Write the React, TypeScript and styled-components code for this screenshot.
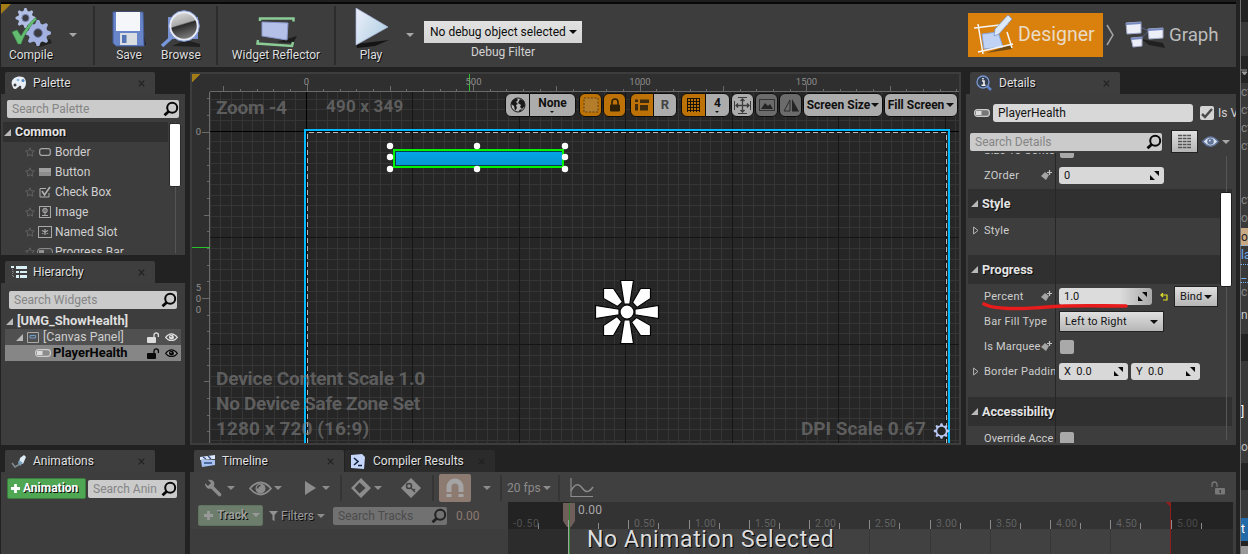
import React from "react";
import styled, { createGlobalStyle, css } from "styled-components";

const Global = createGlobalStyle`
  * { box-sizing: border-box; }
  body { margin: 0; background: #222; overflow: hidden; font-family: Roboto, "Liberation Sans", sans-serif; font-size: 12px; color: #d2d2d2; }
  svg { display: block; flex: none; }
`;

/* ---------- shared parts ---------- */
const Screen = styled.div`display: flex; width: 1248px; height: 554px; overflow: hidden; background: #222;`;
const Editor = styled.div`display: flex; flex-direction: column; width: 1236px; flex: none; border-left: 1px solid #222;`;
const TitleEdge = styled.div`height: 4px; background: #1e1e1e; border-bottom: 2px solid #080808; flex: none;`;
const Label = styled.span<{ $size?: number; $ls?: number; $color?: string; $bold?: boolean; $shadow?: boolean; $w?: number; $l?: number }>`
  display: block; white-space: nowrap; line-height: 16px; flex: none;
  font-size: ${p => p.$size ?? 12}px;
  letter-spacing: ${p => p.$ls ?? 0}px;
  font-weight: ${p => (p.$bold ? 700 : 400)};
  ${p => p.$color && css`color: ${p.$color};`}
  ${p => p.$shadow && css`text-shadow: 1px 1px 0 #0c0c0c;`}
  ${p => p.$w && css`width: ${p.$w}px; overflow: hidden;`}
  ${p => p.$l && css`margin-left: ${p.$l}px;`}
`;
const Caret = styled.i<{ $color?: string; $l?: number; $s?: number }>`
  display: block; width: 0; height: 0; flex: none; margin-left: ${p => p.$l ?? 0}px;
  border: ${p => p.$s ?? 4}px solid transparent; border-bottom: 0; border-top-color: ${p => p.$color ?? "#a8a8a8"};
`;
const Panel = styled.section<{ $h?: number }>`display: flex; flex-direction: column; ${p => p.$h && css`height: ${p.$h}px;`} flex: none;`;
const TabRow = styled.div<{ $l?: number }>`display: flex; height: 22px; flex: none; padding-left: ${p => p.$l ?? 4}px;`;
const TabBox = styled.div<{ $w: number; $dim?: boolean }>`
  display: flex; align-items: center; width: ${p => p.$w}px; padding: 0 10px 0 6px; gap: 6px;
  background: ${p => (p.$dim ? "#2b2b2b" : "#3e3e3e")}; border-radius: 2px 2px 0 0; color: #e0e0e0;
`;
const Spacer = styled.div`flex: 1;`;
const Body = styled.div<{ $h?: number }>`background: #3d3d3d; ${p => (p.$h ? css`height: ${p.$h}px;` : css`flex: 1;`)} overflow: hidden;`;
const Search = styled.div<{ $w: number; $dim?: boolean }>`
  display: flex; align-items: center; justify-content: space-between; width: ${p => p.$w}px; height: 18px; flex: none;
  background: ${p => (p.$dim ? "#717171" : "#cbcbcb")}; color: ${p => (p.$dim ? "#4c4c4c" : "#858585")}; border-radius: 2px; padding: 0 0 0 5px;
`;
const Magnifier = ({ c = "#080808" }: { c?: string }) => (
  <svg width="16" height="16" viewBox="0 0 16 16" fill="none" stroke={c} strokeWidth="2"><circle cx="9.2" cy="6.8" r="5" /><path d="M5.600 10.500 1.500 14.300" strokeWidth="2.800" /></svg>
);
const CloseX = () => <svg width="7" height="7" viewBox="0 0 7 7" stroke="#202020" strokeWidth="1.200"><path d="M.7.7 6.300 6.300M6.300.7.7 6.300" /></svg>;
const Tab = ({ title, icon, w, dim, ls, gap }: { title: string; icon: React.ReactNode; w: number; dim?: boolean; ls?: number; gap?: number }) => (
  <TabBox $w={w} $dim={dim}>{icon}<Label $shadow $ls={ls} $l={gap}>{title}</Label><Spacer /><CloseX /></TabBox>
);
const Expand = ({ c = "#b8b8b8" }: { c?: string }) => <svg width="7" height="7" viewBox="0 0 7 7"><path d="M7 0V7H0Z" fill={c} /></svg>;

/* ---------- main toolbar ---------- */
const Toolbar = styled.div`display: flex; height: 63px; flex: none; background: #3d3d3d; position: relative;`;
const CornerMark = styled.i`position: absolute; left: 0; top: 0; width: 0; height: 0; border-top: 10px solid #a37c18; border-right: 10px solid transparent;`;
const Tool = styled.div<{ $w: number; $drop?: number }>`
  display: flex; flex-direction: column; align-items: center; justify-content: flex-end; width: ${p => p.$w}px; padding-bottom: 4px; color: #dedede;
  svg { margin-bottom: ${p => -(p.$drop ?? 0)}px; }
`;
const ToolCaret = styled.div<{ $w: number }>`display: flex; width: ${p => p.$w}px; padding-top: 29px;`;
const Rule = styled.i`width: 2px; margin: 2px 0; background: #2c2c2c; flex: none;`;
const DebugBox = styled.div`display: flex; flex-direction: column; align-items: center; padding-top: 17px; width: 158px;`;
const DebugSelect = styled.div`display: flex; align-items: center; width: 158px; height: 22px; background: linear-gradient(#e2e2e2, #d4d4d4); color: #0c0c0c; padding-left: 6px; margin-bottom: 1px;`;
const Mode = styled.div<{ $on?: boolean; $w: number }>`
  display: flex; align-items: center; width: ${p => p.$w}px; height: 44px; margin-top: 9px; padding-left: 6px; gap: 4px;
  ${p => p.$on && css`background: #da810d;`}
`;
const gear = (cx: number, cy: number, r: number, n: number) => {
  const pts: string[] = [];
  for (let i = 0; i < n * 4; i++) {
    const a = ((i - 0.5) / (n * 4)) * Math.PI * 2;
    const rr = i % 4 < 2 ? r : r * 0.74;
    pts.push(`${(cx + Math.cos(a) * rr).toFixed(2)},${(cy + Math.sin(a) * rr).toFixed(2)}`);
  }
  return pts.join(" ");
};
const CompileIcon = () => (
  <svg width="42" height="40" viewBox="0 0 42 40">
    <path d="M24 36 40 31 42 35 30 39Z" fill="#222" />
    <polygon points={gear(15.500, 10, 10, 8)} fill="#b2bfe4" /><circle cx="15.500" cy="10" r="3.600" fill="#3b3b3f" stroke="#7784ad" />
    <polygon points={gear(28, 25, 13, 8)} fill="#a2b1df" /><circle cx="28" cy="25" r="4.300" fill="#3b3b3f" stroke="#6b79a8" />
    <path d="M2 24 7 22 11 28C15 21 20 14 25 10L27 11C20 18 14 27 11 36H8Z" fill="#63bd70" stroke="#3a8a49" strokeWidth=".6" />
  </svg>
);
const SaveIcon = () => (
  <svg width="34" height="36" viewBox="0 0 34 36">
    <path d="M26 36 34 34 32 24Z" fill="#202020" />
    <path d="M1 1H31L32 35H4L1 32Z" fill="#6785c8" stroke="#465f9d" />
    <rect x="4" y="1" width="24" height="19" fill="#f5f6fa" /><rect x="8" y="22" width="17" height="12" fill="#d9dde2" /><rect x="10" y="24" width="4.500" height="8" fill="#5474b5" />
  </svg>
);
const BrowseIcon = () => (
  <svg width="42" height="38" viewBox="0 0 42 38">
    <defs><linearGradient id="lens" x1="0" y1="0" x2=".3" y2="1"><stop offset="0" stopColor="#e4e4e4" /><stop offset=".5" stopColor="#aaa" /><stop offset=".55" stopColor="#2c2c2c" /><stop offset="1" stopColor="#777" /></linearGradient></defs>
    <path d="M12 36 26 30 40 34 40 37Z" fill="#202020" /><path d="M8 7H38V29H8Z" fill="#7890cf" />
    <path d="M12 27 2 36" stroke="#7896dc" strokeWidth="3.500" /><circle cx="24" cy="16" r="14" fill="url(#lens)" stroke="#e8ebf5" strokeWidth="2.500" /><circle cx="24" cy="16" r="15.300" fill="none" stroke="#7d94d0" />
  </svg>
);
const ReflectorIcon = () => (
  <svg width="42" height="34" viewBox="0 0 42 34">
    <path d="M22 27 42 21 38 28Z" fill="#1e1e1e" /><path d="M7 7 33 8 32 25 7 21Z" fill="#b4c0e8" stroke="#8a99cb" />
    <path d="M5 6V3.500H38.500V6.500M3 25 2.500 28.500 37 31 38 27" fill="none" stroke="#8bcb96" strokeWidth="2.500" />
  </svg>
);
const PlayIcon = () => (
  <svg width="36" height="41" viewBox="0 0 36 41"><defs><linearGradient id="pl" x1="0" x2="1" y1="0" y2=".6"><stop offset="0" stopColor="#eceefa" /><stop offset="1" stopColor="#b4d2e4" /></linearGradient></defs>
    <path d="M3 36 36 32 22 38 4 40Z" fill="#151515" /><path d="M3 0V37L35 19Z" fill="url(#pl)" stroke="#a9b5dc" strokeWidth=".7" /></svg>
);
const DesignerIcon = () => (
  <svg width="40" height="40" viewBox="0 0 40 40"><path d="M12 38 36 30 38 34Z" fill="#704a17" />
    <path d="M8 19 24 17 29 32 10 34Z" fill="#c0d3f4" stroke="#8ba5d5" /><g stroke="#f5f5f5" strokeWidth="1.500" fill="none"><path d="M0 13 34 9M4 9 9 39M4 37 39 29M33 17 38 33" /></g>
    <path d="M34 0 38 4 25 19 20 21 21 14Z" fill="#dde8f8" stroke="#7998cc" strokeWidth=".8" /></svg>
);
const GraphIcon = () => (
  <svg width="40" height="28" viewBox="0 0 40 28"><path d="M16 18 24 24 40 27 38 22Z" fill="#202020" /><path d="M15 6 24 10 15 18" fill="none" stroke="#53628d" />
    <g fill="#eceef8" stroke="#a2abc9"><path d="M1 2 16 1V12L2 13ZM23 8 38 7V17L24 18ZM6 17 17 16V25L8 26Z" /></g><path d="M1 3 16 2M23 9 38 8M6 18 17 17" stroke="#788ac0" strokeWidth="2" /></svg>
);

/* ---------- left panels ---------- */
const Middle = styled.div`display: flex; padding-top: 5px; height: 378px; flex: none; gap: 5px;`;
const LeftCol = styled.div`display: flex; flex-direction: column; width: 184px; gap: 6px; flex: none;`;
const SearchRow = styled.div<{ $p: string }>`display: flex; align-items: center; padding: ${p => p.$p};`;
const PaletteArea = styled.div`display: flex; height: 131px; margin-left: 2px;`;
const PaletteList = styled.div`width: 165px; overflow: hidden;`;
const Category = styled.div`display: flex; align-items: center; height: 20px; background: #303030; gap: 4px; padding-left: 1px; color: #e4e4e4;`;
const PaletteItem = styled.div`display: flex; align-items: center; height: 20px; padding-left: 22px; gap: 2px; color: #cfcfcf;`;
const IconCell = styled.span`display: flex; width: 15px; justify-content: center; flex: none;`;
const ScrollTrack = styled.div<{ $w: number }>`width: ${p => p.$w}px; margin-left: -1px; display: flex; justify-content: center; background: linear-gradient(90deg, transparent 8px, #555 8px, #555 9px, transparent 9px);`;
const Thumb = styled.i<{ $h: number; $mt: number }>`width: 12px; height: ${p => p.$h}px; margin-top: ${p => p.$mt}px; background: #fff; border: 1px solid #2a2a2a; border-radius: 2px;`;
const TreeRow = styled.div<{ $bg?: string; $h?: number; $pl: number; $c: string }>`
  display: flex; align-items: center; height: ${p => p.$h ?? 16}px; margin: 0 4px; padding-left: ${p => p.$pl}px; padding-right: 3px; background: ${p => p.$bg ?? "transparent"}; color: ${p => p.$c};
`;
const Star = () => <svg width="10" height="10" viewBox="0 0 10 10" fill="none" stroke="#626262"><path d="M5 .8 6.200 3.700 9.400 4 7 6.100 7.700 9.200 5 7.600 2.300 9.200 3 6.100.6 4 3.800 3.700Z" /></svg>;
const Padlock = ({ c }: { c: string }) => <svg width="13" height="11" viewBox="0 0 13 11"><rect x="0" y="5" width="9" height="6" rx="1" fill={c} /><path d="M7 5V3a2.200 2.200 0 0 1 4.400 0V5" fill="none" stroke={c} strokeWidth="1.300" /></svg>;
const Eye = ({ c, w = 13, bg = "#555" }: { c: string; w?: number; bg?: string }) => (
  <svg width={w} height={w * 0.66} viewBox="0 0 13 8.600"><path d="M.6 4.300Q3.500.8 6.500.8T12.400 4.300Q9.500 7.800 6.500 7.800T.6 4.300Z" fill={bg} stroke={c} strokeWidth="1.200" /><circle cx="6.500" cy="4.200" r="2.500" fill={c} /><circle cx="6" cy="3.500" r=".7" fill={bg} /></svg>
);
const WideEye = () => (
  <svg width="23" height="15" viewBox="0 0 23 15"><path d="M1 7.500Q6 1.500 11.500 1.500T22 7.500Q17 13.500 11.500 13.500T1 7.500Z" fill="none" stroke="#8c8c8c" strokeWidth="1.800" /><circle cx="11.500" cy="7.500" r="5" fill="#8c8c8c" /><path d="M8.500 7.500A3 3 0 0 1 11.500 4.500" fill="none" stroke="#404040" strokeWidth="1.400" /></svg>
);
const itemIcons: Record<string, React.ReactNode> = {
  Border: <svg width="12" height="8"><rect x=".7" y=".7" width="10.600" height="6.600" rx="2" fill="none" stroke="#a8a8a8" strokeWidth="1.200" /></svg>,
  Button: <svg width="12" height="8"><rect width="12" height="8" fill="#8d8d8d" /><rect width="12" height="4" fill="#a0a0a0" /></svg>,
  "Check Box": <svg width="12" height="12" viewBox="0 0 12 12" fill="none" stroke="#b0b0b0"><path d="M7 2.500H1V11H10V7" /><path d="M3 5 5.500 9 11 1" strokeWidth="1.700" /></svg>,
  Image: <svg width="12" height="12" viewBox="0 0 12 12" fill="none" stroke="#a8a8a8"><rect x=".5" y=".5" width="11" height="11" /><circle cx="6" cy="4.500" r="2.300" fill="#777" /><path d="M6 6V10M3 9.500H9" /></svg>,
  "Named Slot": <svg width="14" height="12" viewBox="0 0 14 12" fill="none" stroke="#a8a8a8"><rect x=".5" y=".5" width="13" height="11" /><path d="M7 3V9M4 4.500 10 7.500M10 4.500 4 7.500" strokeWidth="1.200" /></svg>,
  "Progress Bar": <svg width="16" height="8"><rect x=".6" y=".6" width="14.800" height="6.800" rx="2.500" fill="#444" stroke="#929292" /><rect x="2" y="2" width="5" height="4" fill="#929292" /></svg>,
};
const BarIcon = ({ f = "#777" }: { f?: string }) => <svg width="16" height="8"><rect x=".6" y=".6" width="14.800" height="6.800" rx="2.800" fill={f} stroke="#cdcdcd" strokeWidth="1.200" /><rect x="2" y="2" width="5.500" height="4" fill="#ddd" /></svg>;
const PaletteIcon = () => <svg width="16" height="14" viewBox="0 0 16 14"><path d="M1 9C-1 3 6-1 12 1c4 2 4 10 0 12-2 1-2-2-4-2s-2 2-4 2-2-2-3-4Z" fill="#e9eff6" /><g fill="#3d3d3d"><circle cx="4" cy="9" r="1.500" /><circle cx="9" cy="11" r="1.300" /></g><circle cx="7" cy="4" r="1.300" fill="#88b5df" /><circle cx="12" cy="4.500" r="1.500" fill="#4e86c8" /></svg>;
const HierIcon = () => <svg width="16" height="12" viewBox="0 0 16 12"><g fill="#d9f0f6"><path d="M0 0H3V2H0ZM5 0H16V3H5ZM5 5H8V7H5ZM9 5H16V7H9ZM5 9H8V12H5ZM9 9H16V12H9Z" /></g><path d="M1.500 3V11M2 6H4M2 10.500H4" stroke="#888" strokeDasharray="1 1" /></svg>;
const BrushIcon = () => <svg width="16" height="13" viewBox="0 0 16 13"><path d="M9 3 13 0 15 2 12 9 8 8Z" fill="#deedf5" /><path d="M8 5 12 8 9 11 7 8Z" fill="#7ca4c0" /><path d="M1 8 4 12 9 9" fill="none" stroke="#7f8d92" strokeWidth="1.500" /></svg>;
const ClapIcon = () => <svg width="16" height="12" viewBox="0 0 16 12"><path d="M0 2 15 0V4L0 5Z" fill="#dce8ff" /><path d="M1 5H15V10L2 12Z" fill="#a6c1f1" /><path d="M3 2 6 4M8 1 11 4M4 8H12" stroke="#324c82" strokeWidth="1.300" /></svg>;
const ConsoleIcon = () => <svg width="14" height="15" viewBox="0 0 14 15"><path d="M0 1 11 0 14 3 13 15 0 14Z" fill="#c5d6fa" /><path d="M3 4 7 7.500 3 11M7 11.500H11" stroke="#16233f" strokeWidth="1.600" fill="none" /></svg>;
const InfoIcon = () => <svg width="16" height="16" viewBox="0 0 16 16"><path d="M11 11 15 15" stroke="#5f84cd" strokeWidth="2.500" /><circle cx="7" cy="7" r="6" fill="#354052" stroke="#7896cf" strokeWidth="1.300" /><path d="M6 6H8V10M5.500 10.300H9.500M7 3V4.500" stroke="#f0f0f0" strokeWidth="1.600" fill="none" /></svg>;

const Palette = () => (
  <Panel $h={183}>
    <TabRow><Tab title="Palette" icon={<PaletteIcon />} w={150} /></TabRow>
    <Body $h={161}>
      <SearchRow $p="6px 6px 4px"><Search $w={172}><Label>Search Palette</Label><Magnifier /></Search></SearchRow>
      <PaletteArea>
        <PaletteList>
          <Category><Expand /><Label $bold $shadow $size={12.500}>Common</Label></Category>
          {Object.keys(itemIcons).map(n => <PaletteItem key={n}><Star /><IconCell>{itemIcons[n]}</IconCell><Label $l={1}>{n}</Label></PaletteItem>)}
        </PaletteList>
        <ScrollTrack $w={16}><Thumb $h={64} $mt={1} /></ScrollTrack>
      </PaletteArea>
    </Body>
  </Panel>
);
const Hierarchy = () => (
  <Panel $h={184}>
    <TabRow><Tab title="Hierarchy" icon={<HierIcon />} w={150} /></TabRow>
    <Body>
      <SearchRow $p="8px 8px 4px"><Search $w={168}><Label>Search Widgets</Label><Magnifier /></Search></SearchRow>
      <TreeRow $pl={1} $c="#dedede"><Expand /><Label $bold $l={4} $size={12.900}>[UMG_ShowHealth]</Label></TreeRow>
      <TreeRow $pl={11} $bg="#505050" $c="#cfcfcf"><Expand />
        <Label $l={4} /><svg width="12" height="11"><path d="M.5.5H11.500V10.500H.5Z" fill="none" stroke="#aaa" /><path d="M3 3.500H8.500V6H3Z" fill="none" stroke="#6e9dcb" /></svg>
        <Label $l={4} $size={12.300}>[Canvas Panel]</Label><Spacer /><Padlock c="#ddd" /><Label $l={5} /><Eye c="#e0e0e0" /></TreeRow>
      <TreeRow $pl={30} $bg="#868686" $c="#070707"><BarIcon f="#8c8c8c" /><Label $bold $l={2} $size={12.900}>PlayerHealth</Label><Spacer /><Padlock c="#090909" /><Label $l={5} /><Eye c="#0a0a0a" bg="#999" /></TreeRow>
    </Body>
  </Panel>
);

/* ---------- designer viewport ---------- */
const Viewport = styled.div`position: relative; width: 771px; height: 373px; border: 2px solid #3d3d3d; overflow: hidden; flex: none; background: #2f2f2f;`;
const OverlayBar = styled.div`position: absolute; left: 313px; top: 19px; display: flex; height: 24px;`;
const Chip = styled.div<{ $w: number; $bg?: string; $r?: string; $ml?: number; $c?: string }>`
  display: flex; align-items: center; justify-content: center; width: ${p => p.$w}px; margin-left: ${p => p.$ml ?? 0}px; flex: none;
  background: ${p => p.$bg ?? "#acacac"}; color: ${p => p.$c ?? "#101010"}; border: 1px solid #0d0d0d; border-radius: ${p => p.$r ?? "6px"};
`;
const Stack = styled.div`display: flex; flex-direction: column; align-items: center; padding-bottom: 3px;`;
const HudText = styled.div<{ $x: number; $y: number; $size?: number; $ls?: number }>`
  position: absolute; left: ${p => p.$x}px; top: ${p => p.$y}px; font-size: ${p => p.$size ?? 19}px; line-height: 25px; font-weight: 700; color: rgba(130,130,130,.62); letter-spacing: ${p => p.$ls ?? 0}px; white-space: nowrap;
`;
const G = 106.53, T = 16.665;
const range = (a: number, b: number) => Array.from({ length: b - a + 1 }, (_, i) => a + i);
const Drawing = () => (
  <svg width="767" height="369" viewBox="192 74 767 369" shapeRendering="crispEdges">
    <rect x="210" y="92" width="749" height="351" fill="#262626" />
    <g stroke="#353535">{range(-9, 61).map(i => <path key={i} d={`M${Math.floor(306 + i * G / 10)}.500 92V443`} />)}{range(-3, 29).map(i => <path key={i} d={`M210 ${Math.floor(131.300 + i * G / 10)}.500H959`} />)}</g>
    <g stroke="#151515">{range(1, 6).map(i => <path key={i} d={`M${Math.floor(306 + i * G)}.500 92V443`} />)}{range(1, 2).map(i => <path key={i} d={`M210 ${Math.floor(131 + i * G)}.500H959`} />)}</g>
    <path d="M306.500 92V443M210 131.500H959" stroke="#000" />
    <g stroke="#6a6a6a">
      <path d="M209.500 91.500H959M209.500 91.500V443" />
      {range(-5, 39).map(i => <path key={i} d={`M${Math.floor(307 + i * T)}.500 ${i % 5 ? 89 : i % 10 ? 86 : 84}V91`} />)}
      {range(-2, 18).map(i => <path key={i} d={`M${i % 5 ? 207 : i % 10 ? 204 : 202} ${Math.floor(132 + i * T)}.500H209`} />)}
    </g>
    <path d="M469.500 74V91" stroke="#29c42c" /><path d="M192 247.500H210" stroke="#29c42c" />
    <path d="M192 74H200L192 82Z" fill="#a37c18" />
    <g fill="#8e8e8e" fontSize="9.500" fontFamily="Roboto, sans-serif" textAnchor="middle">
      <text x="306.500" y="85">0</text><text x="473.500" y="85">500</text><text x="640" y="85">1000</text><text x="806.500" y="85">1500</text>
      <text x="198.500" y="135">0</text><text x="198.500" y="291">5</text><text x="198.500" y="302">0</text><text x="198.500" y="313">0</text>
    </g>
    <path d="M307.500 443V132.500H946.500V443" fill="none" stroke="#b8b8b8" strokeDasharray="5 3" />
    <path d="M305 443V130H949V443" fill="none" stroke="#00b8ff" strokeWidth="2" />
    <defs><linearGradient id="bar" x1="0" y1="0" x2="0" y2="1"><stop offset="0" stopColor="#02a4e8" /><stop offset="1" stopColor="#0695d2" /></linearGradient></defs>
    <rect x="394" y="150" width="169" height="17" fill="#063d52" stroke="#00f400" strokeWidth="2" /><rect x="396" y="152" width="166" height="13" fill="url(#bar)" />
    <g shapeRendering="auto" fill="#fff">{[[390, 146], [477, 146], [565, 146], [390, 157], [565, 157], [390, 169], [477, 169], [565, 169]].map(([x, y]) => <circle key={`${x},${y}`} cx={x} cy={y} r="3.200" />)}</g>
    <g shapeRendering="auto" fill="#fff" stroke="#050505" strokeWidth="1.200" transform="translate(627 312)">
      {[0, 90, 180, 270].map(a => <g key={a} transform={`rotate(${a})`}><path d="M-6.500-31.500H6.500L2.800-8H-2.800Z" /><path d="M13.500-23.500H23.500V-13.500L10-4.500 5.500-9.500Z" /></g>)}
      <circle r="7" />
    </g>
    <g shapeRendering="auto"><polygon points={gear(941.500, 431, 7.800, 8)} fill="#b8c7f3" /><circle cx="941.500" cy="431" r="4.300" fill="#252525" /></g>
  </svg>
);
const Globe = () => <svg width="16" height="16" viewBox="0 0 16 16"><circle cx="8" cy="8" r="7" fill="#b8b8b8" stroke="#181818" /><path d="M2 4 6 1 8 3 6 5 8 7 6 8 7 11 5 14 4 9 1 7ZM10 2 14 4 15 9 12 12 10 10 11 8 8 6ZM9 13 12 12 10 15Z" fill="#181818" /></svg>;
const Designer = () => (
  <Viewport>
    <Drawing />
    <HudText $x={24} $y={21} $ls={-0.25}>Zoom -4</HudText><HudText $x={134} $y={20} $size={17} $ls={0.2}>490 x 349</HudText>
    <HudText $x={24} $y={292} $ls={-0.18}>Device Content Scale 1.0</HudText><HudText $x={24} $y={317} $ls={-0.28}>No Device Safe Zone Set</HudText>
    <HudText $x={24} $y={342} $ls={0.1}>1280 x 720 (16:9)</HudText><HudText $x={609} $y={342}>DPI Scale 0.67</HudText>
    <OverlayBar>
      <Chip $w={25} $r="6px 0 0 6px"><Globe /></Chip>
      <Chip $w={47} $r="0 6px 6px 0" $ml={-1}><Stack><Label $bold $size={12}>None</Label><Caret $s={2} $color="#111" /></Stack></Chip>
      <Chip $w={23} $ml={3} $bg="#bd7208"><svg width="16" height="16"><rect x="1" y="1" width="14" height="14" fill="#b47d2c" stroke="#5b4216" strokeDasharray="2 1.500" /></svg></Chip>
      <Chip $w={23} $ml={1} $bg="#bd7208"><svg width="12" height="14"><path d="M3 7V4a3 3 0 0 1 6 0V7" stroke="#2d2008" strokeWidth="1.600" fill="none" /><rect x="1" y="6.500" width="10" height="7" rx="1" fill="#2d2008" /></svg></Chip>
      <Chip $w={24} $ml={4} $bg="#bd7208" $r="6px 0 0 6px"><svg width="16" height="14"><path d="M1 1.500H4V4H1ZM1 6H4V12.500H1ZM6 1.500H15V5H6ZM6 7H14V12.500H6Z" fill="#3e2c10" /></svg></Chip>
      <Chip $w={24} $ml={-1} $r="0 6px 6px 0" $c="#444"><Label $bold $size={13}>R</Label></Chip>
      <Chip $w={25} $ml={4} $bg="#bd7208" $r="6px 0 0 6px"><svg width="14" height="14" stroke="#191208"><path d="M.5 0V14M3.500 0V14M6.500 0V14M9.500 0V14M12.500 0V14M0 .5H13M0 3.500H13M0 6.500H13M0 9.500H13M0 12.500H13" /></svg></Chip>
      <Chip $w={25} $ml={-1} $r="0 6px 6px 0"><Stack><Label $bold>4</Label><Caret $s={2} $color="#111" /></Stack></Chip>
      <Chip $w={23} $ml={1}><svg width="17" height="17" viewBox="0 0 17 17" fill="none" stroke="#3c3c3c"><path d="M4 .5H13M4 16.500H13M.5 4V13M16.500 4V13" /><path d="M8.500 2V15M2 8.500H15M6.500 4 8.500 2 10.500 4M6.500 13 8.500 15 10.500 13M4 6.500 2 8.500 4 10.500M13 6.500 15 8.500 13 10.500" strokeWidth="1.300" /></svg></Chip>
      <Chip $w={23} $ml={1} $bg="#6b6b6b"><svg width="16" height="12"><rect x=".5" y=".5" width="15" height="11" fill="none" stroke="#343434" /><path d="M2 10 6 4 9 7 11 5 14 10Z" fill="#252525" /></svg></Chip>
      <Chip $w={23} $ml={1} $bg="#6b6b6b"><svg width="16" height="13"><path d="M7 1V12H1Z" fill="none" stroke="#2c2c2c" /><path d="M9 0V12.500H16Z" fill="#252525" /></svg></Chip>
      <Chip $w={80} $ml={1}><Label $bold>Screen Size</Label><Caret $color="#111" $l={1} /></Chip>
      <Chip $w={74} $ml={1}><Label $bold>Fill Screen</Label><Caret $color="#111" $l={2} /></Chip>
    </OverlayBar>
  </Viewport>
);

/* ---------- details ---------- */
const DetailsCol = styled.div`display: flex; flex-direction: column; width: 270px; flex: none;`;
const DetailsBody = styled.div`background: #3d3d3d; height: 351px; overflow: hidden;`;
const Field = styled.div<{ $w: number; $h?: number; $ml?: number; $shade?: boolean }>`
  display: flex; align-items: center; justify-content: space-between; width: ${p => p.$w}px; height: ${p => p.$h ?? 17}px; margin-left: ${p => p.$ml ?? 0}px; padding: 0 5px; border-radius: 3px; flex: none; color: #141414;
  background: ${p => (p.$shade ? "linear-gradient(90deg, #dcdcdc 65%, #a9a9a9)" : "#d8d8d8")};
`;
const DropButton = styled.div<{ $w: number; $h?: number; $ml?: number }>`
  display: flex; align-items: center; justify-content: space-between; width: ${p => p.$w}px; height: 21px; margin-left: ${p => p.$ml ?? 0}px; padding: 0 5px 0 5px; color: #141414; flex: none;
  background: linear-gradient(#e0e0e0, #b6b6b6); border: 1px solid #222;
`;
const Check = styled.div<{ $lit?: boolean }>`display: flex; align-items: center; justify-content: center; width: 14px; height: 14px; margin-left: ${p => (p.$lit ? 0 : 1)}px; border-radius: 2px; background: ${p => (p.$lit ? "#d4d4d4" : "#a9a9a9")}; flex: none;`;
const GridButton = styled.div`display: flex; align-items: center; justify-content: center; width: 27px; height: 23px; background: linear-gradient(#e0e0e0, #b5b5b5); border: 1px solid #222; margin: 0 4px 0 9px;`;
const PropArea = styled.div`display: flex; height: 290px; position: relative;`;
const PropList = styled.div`width: 266px; padding-left: 2px; overflow: hidden; flex: none;`;
const PropRow = styled.div<{ $h: number; $head?: boolean; $up?: number }>`
  display: flex; align-items: center; height: ${p => p.$h}px; margin-top: ${p => -(p.$up ?? 0)}px; overflow: hidden;
  background: linear-gradient(#262626, #262626) 87px 0 / 1px 100% no-repeat, ${p => (p.$head ? "#303030" : "transparent")};
`;
const NameCell = styled.div<{ $pl?: number }>`display: flex; align-items: center; justify-content: space-between; width: 87px; padding: 0 3px 0 ${p => p.$pl ?? 16}px; margin-right: 4px; overflow: hidden; flex: none; color: #cdcdcd;`;
const HeadCell = styled.div`display: flex; align-items: center; padding-left: 3px; gap: 4px; color: #e4e4e4;`;
const PropThumb = styled.i`position: absolute; left: 254px; top: 39px; width: 12px; height: 95px; background: #fff; border: 1px solid #1d1d1d; border-radius: 2px;`;
const PropTrack = styled.i`position: absolute; left: 260px; top: 3px; width: 1px; height: 284px; background: #565656;`;
const RedStroke = styled.svg`position: absolute; left: 15px; top: 147px;`;
const Spin = () => <svg width="9" height="9" viewBox="0 0 9 9"><path d="M4 0H9V5ZM0 4 5 9H0Z" fill="#0b0b0b" /></svg>;
const Hook = () => <svg width="11" height="11" viewBox="0 0 11 11"><path d="M0 6 4 2 8 5 5 10Z" fill="#a5a5a5" /><path d="M8.500 0V5M6 2.500H11" stroke="#c4c4c4" strokeWidth="1.200" /></svg>;
const Hollow = () => <svg width="6" height="9" viewBox="0 0 6 9"><path d="M.6 1V8L5 4.500Z" fill="none" stroke="#b5b5b5" /></svg>;
const Name = ({ t, hook, arrow, ls = 0.3 }: { t: string; hook?: boolean; arrow?: boolean; ls?: number }) => (
  <NameCell $pl={arrow ? 5 : 16}>{arrow && <Hollow />}<Label $size={11} $ls={ls} $l={arrow ? 5 : 0}>{t}</Label><Spacer />{hook && <Hook />}</NameCell>
);
const Head = ({ t }: { t: string }) => <PropRow $h={29} $head><HeadCell><Expand /><Label $bold $shadow $size={12.600}>{t}</Label></HeadCell></PropRow>;
const Details = () => (
  <DetailsCol>
    <TabRow><Tab title="Details" icon={<InfoIcon />} w={150} gap={1} /></TabRow>
    <DetailsBody>
      <SearchRow $p="10px 0 0 8px"><BarIcon /><Field $w={200} $h={18} $ml={3}><Label>PlayerHealth</Label></Field>
        <Label $l={7} /><Check $lit><svg width="12" height="11" viewBox="0 0 12 11"><path d="M1 6 4 9 11 1" fill="none" stroke="#4b4b4b" strokeWidth="2.500" /></svg></Check><Label $l={4} $w={18}>Is V</Label></SearchRow>
      <SearchRow $p="8px 0 0 4px"><Search $w={192}><Label>Search Details</Label><Magnifier /></Search>
        <GridButton><svg width="15" height="15" stroke="#555" strokeWidth="1.600"><path d="M1 1.500H5M5.700 1.500H9.500M10.200 1.500H14M1 4.500H5M5.700 4.500H9.500M10.200 4.500H14M1 7.500H5M5.700 7.500H9.500M10.200 7.500H14M1 10.500H5M5.700 10.500H9.500M10.200 10.500H14M1 13.500H5M5.700 13.500H9.500M10.200 13.500H14" /></svg></GridButton>
        <Eye c="#62759a" bg="#dce4ef" w={17} /><Caret $l={3} /></SearchRow>
      <PropArea>
        <PropList>
          <PropRow $h={23} $up={14}><Name t="Size To Conte" /><Check /></PropRow>
          <PropRow $h={27}><Name t="ZOrder" hook /><Field $w={105}><Label $size={11}>0</Label><Spin /></Field></PropRow>
          <Head t="Style" />
          <PropRow $h={25}><Name t="Style" arrow /></PropRow>
          <PropRow $h={12} />
          <Head t="Progress" />
          <PropRow $h={25}><Name t="Percent" hook /><Field $w={93} $shade><Label $size={11} $ls={0}>1.0</Label><Spin /></Field>
            <Label $l={8} /><svg width="8" height="8" fill="none" stroke="#e4df27" strokeWidth="1.200"><path d="M3 0 1 2 3 4M1 2H7V7H3" /></svg><DropButton $w={44} $ml={6}><Label $size={11} $ls={0.1}>Bind</Label><Caret $color="#111" /></DropButton></PropRow>
          <PropRow $h={25}><Name t="Bar Fill Type" /><DropButton $w={105}><Label $size={11} $ls={0.15}>Left to Right</Label><Caret $color="#111" /></DropButton></PropRow>
          <PropRow $h={25}><Name t="Is Marquee" hook ls={0.2} /><Check /></PropRow>
          <PropRow $h={25}><Name t="Border Paddin" arrow ls={0.25} /><Field $w={69}><Label $size={11}>X&nbsp; 0.0</Label><Spin /></Field><Field $w={69} $ml={3}><Label $size={11}>Y&nbsp; 0.0</Label><Spin /></Field></PropRow>
          <PropRow $h={13} />
          <Head t="Accessibility" />
          <PropRow $h={25}><Name t="Override Acce" ls={0.1} /><Check /></PropRow>
        </PropList>
        <PropTrack /><PropThumb />
        <RedStroke width="150" height="16" fill="none" stroke="#e81c1c" strokeWidth="3.600" strokeLinecap="round"><path d="M3 4C14 10 42 9 66 7S115 6 145 6" /></RedStroke>
      </PropArea>
    </DetailsBody>
  </DetailsCol>
);

/* ---------- bottom ---------- */
const Bottom = styled.div`display: flex; height: 109px; padding-top: 5px; gap: 5px; flex: none;`;
const AnimCol = styled.div`display: flex; flex-direction: column; width: 184px; flex: none;`;
const GreenButton = styled.div<{ $w: number; $dim?: boolean }>`
  display: flex; align-items: center; gap: ${p => (p.$dim ? 3 : 2)}px; width: ${p => p.$w}px; height: 21px; padding-left: ${p => (p.$dim ? 4 : 2)}px; padding-bottom: 1px; border: 1px solid ${p => (p.$dim ? "#60735f" : "#3b7d3e")}; border-radius: 2px;
  background: ${p => (p.$dim ? "#6d7d6c" : "#4fa653")}; color: ${p => (p.$dim ? "#9a9f99" : "#fff")}; flex: none;
`;
const TimeCol = styled.div`display: flex; flex-direction: column; width: 1046px; flex: none;`;
const TimeTools = styled.div`display: flex; align-items: center; height: 30px; padding-top: 2px; background: #404040; flex: none;`;
const ToolCell = styled.div<{ $w: number; $pl?: number }>`display: flex; align-items: center; width: ${p => p.$w}px; padding-left: ${p => p.$pl ?? 0}px; color: #8b8b8b; flex: none;`;
const SnapButton = styled.div`display: flex; align-items: center; justify-content: center; width: 32px; height: 28px; background: #8d7a70; border-radius: 2px;`;
const Divider = styled.i`width: 2px; height: 26px; background: #353535; flex: none;`;
const TimeBody = styled.div`display: flex; flex: 1; background: #3d3d3d; position: relative;`;
const TrackSide = styled.div`display: flex; width: 318px; height: 27px; align-items: center; padding-left: 8px; background: #404040; flex: none;`;
const NoAnim = styled.div`position: absolute; left: 397px; top: 26px; font-size: 23px; letter-spacing: .62px; line-height: 24px; color: #dcdcdc; text-shadow: 1px 1px 0 #000; white-space: nowrap;`;
const Plus = ({ c = "#fff" }: { c?: string }) => <svg width="11" height="11"><path d="M5.500 1V10M1 5.500H10" stroke={c} strokeWidth="2.800" /></svg>;
const grey = "#8c8c8c";
const S = 60.25;
const TimeRuler = () => (
  <svg width="726" height="52" viewBox="508 502 726 52" shapeRendering="crispEdges">
    <rect x="508" y="502" width="725" height="27" fill="#333" /><rect x="508" y="529" width="725" height="25" fill="#414141" />
    <g stroke="#383838">{range(1, 9).map(i => <path key={i} d={`M${Math.round(568 + i * S)}.500 529V554`} />)}</g>
    <rect x="508" y="502" width="61" height="27" fill="#232323" /><rect x="508" y="529" width="61" height="25" fill="#2c2c2c" /><rect x="1171" y="502" width="62" height="27" fill="#232323" /><rect x="1171" y="529" width="62" height="25" fill="#2c2c2c" />
    <g stroke="#8b8b8b">{range(1, 10).map(i => <path key={i} d={`M${Math.round(568 + i * S)}.500 520V529`} />)}{range(-1, 10).map(i => <path key={i} d={`M${Math.round(568 + (i + 0.5) * S)}.500 523V529`} />)}</g>
    <g fill="#626262" fontSize="10.500" fontFamily="Roboto, sans-serif">
      <text x="513" y="527" fill="#505050" textLength="26">-0.50</text>
      {range(1, 10).map(i => <text key={i} x={Math.round(574 + i * S)} y="527" textLength="21" fill={i === 10 ? "#4a4a4a" : undefined}>{(i / 2).toFixed(2)}</text>)}
    </g>
    <path d="M1170.500 502V554" stroke="#8b1e1e" /><path d="M1165 502H1171V508Z" fill="#8b1e1e" />
    <path d="M563 503H575V521L571 527H567L563 521Z" fill="#705e5b" shapeRendering="auto" /><path d="M568.500 520V554" stroke="#a0a0a0" /><path d="M569.500 503V554" stroke="#2f8a30" />
    <text x="578" y="514" fill="#a8a8a8" fontSize="12" fontFamily="Roboto, sans-serif" textLength="24">0.00</text>
  </svg>
);
const BottomArea = () => (
  <Bottom>
    <AnimCol>
      <TabRow><Tab title="Animations" icon={<BrushIcon />} w={150} /></TabRow>
      <Body><SearchRow $p="6px 6px"><GreenButton $w={79}><Plus /><Label $bold $shadow>Animation</Label></GreenButton><Label $l={2} /><Search $w={89}><Label $w={65}>Search Anin</Label><Magnifier /></Search></SearchRow></Body>
    </AnimCol>
    <TimeCol>
      <TabRow><Tab title="Timeline" icon={<ClapIcon />} w={150} /><Label $l={1} /><Tab title="Compiler Results" icon={<ConsoleIcon />} w={150} dim gap={2} /></TabRow>
      <TimeTools>
        <ToolCell $w={58} $pl={14}><svg width="18" height="18" viewBox="0 0 18 18"><path d="M7 7 15.500 15.500" stroke={grey} strokeWidth="3.600" strokeLinecap="round" /><path d="M1 4 4 7 7 4 4 1C10 0 12 4 9 9 5 11 1 9 1 4Z" fill={grey} /></svg><Caret $l={5} $color={grey} /></ToolCell>
        <ToolCell $w={56} $pl={1}><WideEye /><Caret $l={2} $color={grey} /></ToolCell>
        <ToolCell $w={36}><svg width="12" height="14"><path d="M1 0 12 7 1 14Z" fill={grey} /></svg><Caret $l={6} $color={grey} /></ToolCell><Divider />
        <ToolCell $w={50} $pl={8}><svg width="22" height="20" viewBox="0 0 22 20"><path d="M11 0 21 10 11 20 1 10ZM9.500 4.500 4.500 10 9.500 15.500 15.500 10Z" fill={grey} fillRule="evenodd" /></svg><Caret $l={2} $color={grey} /></ToolCell>
        <ToolCell $w={40} $pl={8}><svg width="22" height="20" viewBox="0 0 22 20"><path d="M11 0 21 10 11 20 1 10Z" fill={grey} /><circle cx="9" cy="8" r="2.500" fill="none" stroke="#404040" strokeWidth="1.500" /><path d="M11 10 15 14M13 13 15 11" stroke="#404040" strokeWidth="1.500" /></svg></ToolCell><Divider />
        <ToolCell $w={66} $pl={5}><SnapButton><svg width="20" height="20" viewBox="0 0 20 20"><path d="M4 14V9a6 6 0 0 1 12 0V14" fill="none" stroke="#a4a4a4" strokeWidth="5" /><path d="M1.500 16H6.500V19H1.500ZM13.500 16H18.500V19H13.500Z" fill="#a4a4a4" /></svg></SnapButton><Caret $l={12} $color={grey} /></ToolCell><Divider />
        <ToolCell $w={56} $pl={5}><Label>20 fps</Label><Caret $l={2} $color={grey} /></ToolCell><Divider />
        <ToolCell $w={60} $pl={10}><svg width="24" height="20"><path d="M1 0V18.500H23" fill="none" stroke={grey} strokeWidth="1.200" /><path d="M1 13C6 3 10 7 13 11S20 14 23 9" fill="none" stroke={grey} strokeWidth="1.500" /></svg></ToolCell>
        <Spacer /><svg width="20" height="14" viewBox="0 0 20 14"><path d="M1 6V3.500a2.500 2.500 0 0 1 5 0V6" fill="none" stroke="#777" strokeWidth="1.300" /><rect x="4" y="7" width="10" height="6.500" rx="1" fill="#777" /><rect x="8.500" y="9" width="1.500" height="3" fill="#404040" /></svg><Label $l={5} />
      </TimeTools>
      <TimeBody>
        <TrackSide><GreenButton $w={65} $dim><Plus c="#999" /><Label $bold $shadow>Track</Label><Caret $l={2} $color="#999" /></GreenButton>
          <Label $l={6} /><svg width="9" height="10"><path d="M0 0H9L5.500 4V10L3.500 9V4Z" fill="#929292" /></svg><Label $l={3} $color="#999" $shadow>Filters</Label><Caret $l={3} $color={grey} />
          <Label $l={8} /><Search $w={114} $dim><Label>Search Tracks</Label><Magnifier c="#222" /></Search><Label $l={9} $color="#8d7a70">0.00</Label></TrackSide>
        <TimeRuler />
        <NoAnim>No Animation Selected</NoAnim>
      </TimeBody>
    </TimeCol>
  </Bottom>
);

/* ---------- neighbouring window ---------- */
const Neighbour = styled.div`display: flex; flex-direction: column; width: 12px; flex: none; padding-left: 4px; background: #222;`;
const Strip = styled.div<{ $h: number; $bg?: string; $c?: string; $line?: boolean }>`
  width: 8px; height: ${p => p.$h}px; background: ${p => p.$bg ?? "#393939"}; color: ${p => p.$c ?? "#848484"}; flex: none; overflow: hidden; white-space: nowrap; line-height: ${p => p.$h}px; font-size: 12px;
  border-left: 1px solid #707070; ${p => p.$line && css`border-bottom: 1px dotted #79b2ee;`}
`;
const Side = () => (
  <Neighbour>
    <Strip $h={22} $bg="#222" /><Strip $h={34} /><Strip $h={27} $bg="#242424"><svg width="7" height="20"><path d="M0 14H6M1 16H6L3.500 19Z" stroke="#999" fill="#999" /></svg></Strip>
    {["ct", "ct", "ct", "ct"].map((t, i) => <Strip key={i} $h={18}>{t}</Strip>)}
    <Strip $h={36} /><Strip $h={18}>ct</Strip><Strip $h={19}>o</Strip><Strip $h={18} $bg="#c9a886" $c="#222" $line>or</Strip><Strip $h={19} $c="#71a9ed" $line>la</Strip><Strip $h={18} $c="#71a9ed" $line>_</Strip><Strip $h={18}>c</Strip>
    <Strip $h={28} $c="#ccc">n</Strip><Strip $h={5} /><Strip $h={27} $bg="#222" /><Strip $h={41} /><Strip $h={20} $c="#fff">]</Strip><Strip $h={13} /><Strip $h={24} $c="#bbb">or</Strip><Strip $h={4} /><Strip $h={27} $bg="#242424" /><Strip $h={28} /><Strip $h={23} $bg="#236ba8" $c="#fff">t</Strip><Strip $h={5} $bg="#222" /><Strip $h={8} $bg="#999" />
  </Neighbour>
);

export default function App() {
  return (
    <>
      <Global />
      <Screen>
        <Editor>
          <TitleEdge />
          <Toolbar>
            <CornerMark />
            <Tool $w={60} $drop={1}><CompileIcon /><Label $shadow>Compile</Label></Tool><ToolCaret $w={32}><Caret $l={8} /></ToolCaret><Rule />
            <Tool $w={68}><SaveIcon /><Label $shadow>Save</Label></Tool><Tool $w={36} $drop={1}><BrowseIcon /><Label $shadow>Browse</Label></Tool><ToolCaret $w={17} /><Rule />
            <Tool $w={116} $drop={2}><ReflectorIcon /><Label $shadow>Widget Reflector</Label></Tool><Rule />
            <Tool $w={70} $drop={2}><PlayIcon /><Label $shadow>Play</Label></Tool><ToolCaret $w={18}><Caret /></ToolCaret>
            <DebugBox><DebugSelect><Label>No debug object selected</Label><Caret $color="#0a0a0a" $l={3} /></DebugSelect><Label>Debug Filter</Label></DebugBox>
            <Spacer />
            <Mode $w={135} $on><DesignerIcon /><Label $size={19.500} $color="#eadbc5">Designer</Label></Mode>
            <svg width="16" height="63"><path d="M4 21 10 31 4 41" fill="none" stroke="#a2a2a2" strokeWidth="1.500" /></svg>
            <Mode $w={117}><GraphIcon /><Label $size={18.700} $color="#bcbcbc">Graph</Label></Mode>
          </Toolbar>
          <Middle><LeftCol><Palette /><Hierarchy /></LeftCol><Designer /><Details /></Middle>
          <BottomArea />
        </Editor>
        <Side />
      </Screen>
    </>
  );
}
